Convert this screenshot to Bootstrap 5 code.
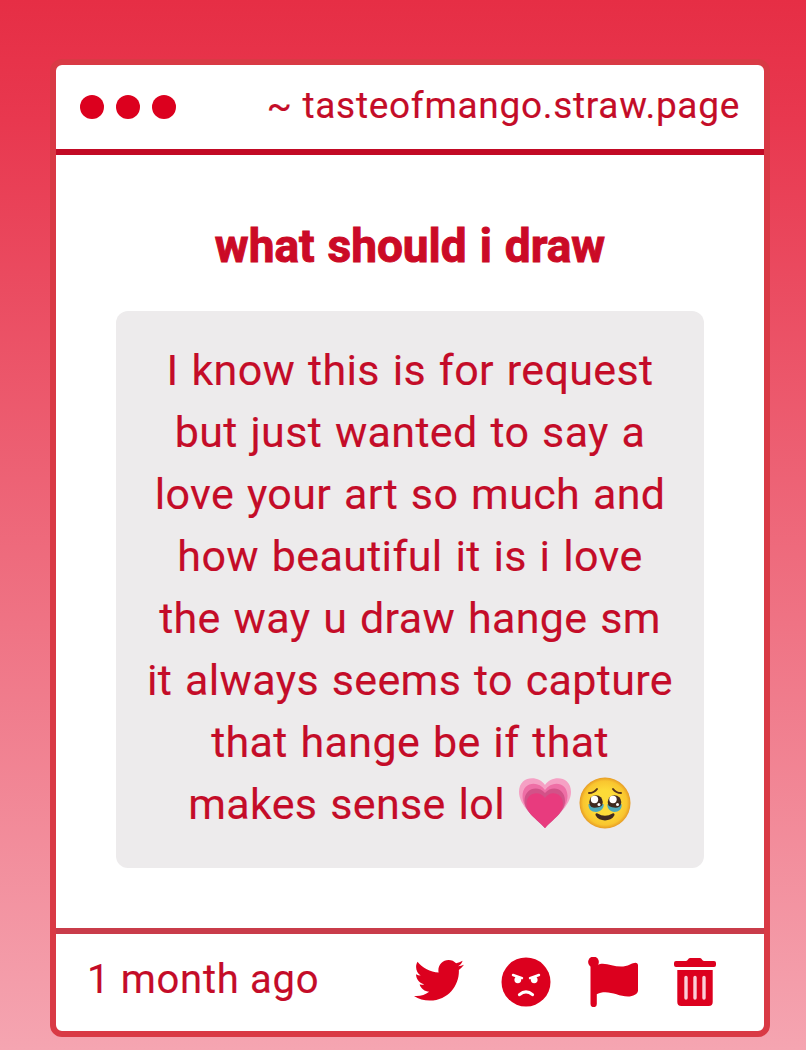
<!DOCTYPE html>
<html lang="en">
<head>
<meta charset="utf-8">
<meta name="viewport" content="width=device-width, initial-scale=1">
<title>tasteofmango.straw.page</title>
<link href="https://cdn.jsdelivr.net/npm/bootstrap@5.3.0/dist/css/bootstrap.min.css" rel="stylesheet">
<style>
  body { height: 1050px; overflow: hidden; padding: 59px 36px 0 50px; color: #c40c28; font-family: Roboto, "Liberation Sans", sans-serif;
    background: linear-gradient(180deg, #e62e45 0, #e8384f 120px, #f5a5b1 1050px); }
  .window { height: 978px; border: 6px solid #d93a45; border-radius: 12px; }
  .window-bar { height: 90px; padding: 0 24px; border-bottom: 6px solid #c20a25; }
  .dots { gap: 12px; }
  .dot { width: 24px; height: 24px; background: #dc001e; }
  .site, .message, .when { -webkit-text-stroke: .15px currentColor; }
  .site { font-size: 37px; line-height: 44px; letter-spacing: .7px; margin-top: -3px; }
  .window-body { padding: 60px 60px 0; }
  .prompt { font-size: 46px; line-height: 62px; margin-bottom: 34px; color: #cb0a26; word-spacing: 1.5px; -webkit-text-stroke: 1px currentColor; }
  .message { height: 557px; padding-top: 28px; border-radius: 12px; background: #edebec; font-size: 43px; line-height: 62px; letter-spacing: .35px; word-spacing: 1.8px; }
  .emoji { width: 54px; height: 54px; vertical-align: -12px; }
  .emoji + .emoji { margin-left: 6px; }
  .window-foot { height: 103px; border-top: 6px solid #c93c4a; padding: 0 44px 0 31px; }
  .when { font-size: 40px; line-height: 48px; letter-spacing: .7px; margin-top: -6px; }
  .actions { gap: 37px; color: #dc001e; margin-top: -2px; }
  .actions svg { width: 50px; height: 50px; display: block; }
  .actions svg:last-child { margin-left: -5px; }
</style>
</head>
<body>
<main class="window d-flex flex-column bg-white">
  <header class="window-bar d-flex align-items-center justify-content-between flex-shrink-0">
    <div class="d-flex dots"><span class="dot rounded-circle"></span><span class="dot rounded-circle"></span><span class="dot rounded-circle"></span></div>
    <div class="site text-nowrap">~ tasteofmango.straw.page</div>
  </header>
  <section class="window-body flex-grow-1 text-center">
    <h1 class="prompt fw-bold text-nowrap">what should i draw</h1>
    <p class="message mb-0 text-nowrap">I know this is for request<br>but just wanted to say a<br>love your art so much and<br>how beautiful it is i love<br>the way u draw hange sm<br>it always seems to capture<br>that hange be if that<br>makes sense lol <svg class="emoji" viewBox="0 0 54 54" role="img" aria-label="growing heart">
      <path fill="#f5a0c4" d="M27 8C21-2 1-2 1 15c0 14 16 25 26 36 10-11 26-22 26-36C53-2 33-2 27 8z"/>
      <path fill="#ee6fa6" d="M27 13C20 3 4.500 5 4.500 19c0 13 14 22 22.500 32 8.500-10 22.500-19 22.500-32C49.500 5 34 3 27 13z"/>
      <path fill="#d25288" d="M27 16C20 8 6.500 11 6.500 24c0 11 13 19 20.500 27 7.500-8 20-16 20-27C47 11 34 8 27 16z"/>
      <path fill="#e83b7e" d="M27 21c-5-8-18.500-6-18.500 6 0 10 12 16 18.500 24 6-8 18-14 18-24 0-12-13-14-18-6z"/></svg><svg class="emoji" viewBox="0 0 54 54" role="img" aria-label="face holding back tears">
      <defs><radialGradient id="skin"><stop offset=".5" stop-color="#fddb38"/><stop offset=".86" stop-color="#f9c52f"/><stop offset="1" stop-color="#e69b25"/></radialGradient></defs>
      <circle cx="27" cy="26" r="25.500" fill="url(#skin)"/>
      <path d="M11 16q5 0 8-4M35 12q3 4 8 4" fill="none" stroke="#55331c" stroke-width="2" stroke-linecap="round"/>
      <path fill="#4fabbb" d="M10.500 27h15c1 4-3 8-7.500 8s-8-3-7.500-8zM29.500 27h14c1 5-3 8-7 8s-8-4-7-8z"/>
      <circle cx="18" cy="25" r="6.800" fill="#402a20"/><circle cx="36.500" cy="25" r="6.800" fill="#402a20"/>
      <path fill="#4fabbb" d="M12 30q6 2 12-1-1 5-6 5-4 0-6-4zM30.500 29q6 3 12 1-2 4-6 4-5 0-6-5z"/>
      <g fill="#fff"><circle cx="16.500" cy="22.500" r="3.700"/><circle cx="35" cy="22.500" r="3.700"/><circle cx="21" cy="27.500" r="1.500"/><circle cx="39.500" cy="27.500" r="1.500"/></g>
      <path fill="#402a20" d="M19.500 36.500q7.500 4.500 15 0c1.500-1 2.500.5 1.800 2-3.300 6.500-15.300 6.500-18.600 0-.7-1.500.3-3 1.800-2z"/></svg></p>
  </section>
  <footer class="window-foot d-flex align-items-center justify-content-between flex-shrink-0">
    <div class="when text-nowrap">1 month ago</div>
    <div class="actions d-flex" aria-hidden="true">
      <svg viewBox="0 0 512 512" fill="currentColor"><path d="M459.370 151.716c.325 4.548.325 9.097.325 13.645 0 138.720-105.583 298.558-298.558 298.558-59.452 0-114.680-17.219-161.137-47.106 8.447.974 16.568 1.299 25.340 1.299 49.055 0 94.213-16.568 130.274-44.832-46.132-.975-84.792-31.188-98.112-72.772 6.498.974 12.995 1.624 19.818 1.624 9.421 0 18.843-1.300 27.614-3.573-48.081-9.747-84.143-51.980-84.143-102.985v-1.299c13.969 7.797 30.214 12.670 47.431 13.319-28.264-18.843-46.781-51.005-46.781-87.391 0-19.492 5.197-37.360 14.294-52.954 51.655 63.675 129.300 105.258 216.365 109.807-1.624-7.797-2.599-15.918-2.599-24.040 0-57.828 46.782-104.934 104.934-104.934 30.213 0 57.502 12.670 76.670 33.137 23.715-4.548 46.456-13.320 66.599-25.340-7.798 24.366-24.366 44.833-46.132 57.827 21.117-2.273 41.584-8.122 60.426-16.243-14.292 20.791-32.161 39.308-52.628 54.253z" transform="translate(0 -18)"/></svg>
      <svg viewBox="0 0 50 50"><circle cx="25" cy="25" r="24.500" fill="currentColor"/><g fill="none" stroke="#fff" stroke-linecap="round"><path d="M12 18l9 3.200M38 18l-9 3.200" stroke-width="2.400"/><path d="M18.500 37.600q6.500-5.600 13 0" stroke-width="3.200"/></g><circle cx="16.800" cy="22.800" r="3.400" fill="#fff"/><circle cx="33.200" cy="22.800" r="3.400" fill="#fff"/></svg>
      <svg viewBox="0 0 50 50" fill="currentColor"><circle cx="5.500" cy="5" r="5.400"/><path d="M2.500 5h6.300v42a3.150 3.150 0 0 1-6.300 0zM8 8.500c10-6 21 5.500 34-1 4-2 8-3 8 1v25c0 3.500-5 6-10 6-11 0-20-8-32-2z"/></svg>
      <svg viewBox="0 0 50 50"><path fill="currentColor" d="M6 4h10c2 0 2-3 4-3h10c2 0 2 3 4 3h10q2 0 2 2v2q0 2-2 2H6q-2 0-2-2V6q0-2 2-2zM7.300 13h35.400v32q0 4-4 4H11.300q-4 0-4-4z"/><path d="M16 20.500v20.500M25 20.500v20.500M34 20.500v20.500" stroke="#fbcdd8" stroke-width="3.400" stroke-linecap="round"/></svg>
    </div>
  </footer>
</main>
<script src="https://cdn.jsdelivr.net/npm/bootstrap@5.3.0/dist/js/bootstrap.bundle.min.js"></script>
</body>
</html>
